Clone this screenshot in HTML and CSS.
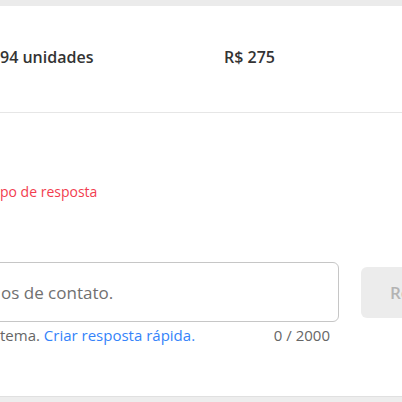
FILE: index.html
```html
<!DOCTYPE html>
<html lang="pt-BR">
<head>
<meta charset="utf-8">
<link rel="stylesheet" href="styles.css">
</head>
<body>
<div class="topbar"></div>
<main class="card">
  <section class="summary">
    <span class="cell cell-qty">94 unidades</span>
    <span class="cell cell-price">R$ 275</span>
  </section>
  <section class="answer">
    <p class="error">po de resposta</p>
    <div class="compose">
      <div class="field">
        <div class="textarea"><span class="placeholder">os de contato.</span></div>
        <div class="helper">
          <span>tema. <a class="link" href="#">Criar resposta rápida.</a></span>
          <span class="count">0 / 2000</span>
        </div>
      </div>
      <button class="submit" type="button">Responder</button>
    </div>
  </section>
</main>
<div class="bottombar"></div>
</body>
</html>
```
FILE: styles.css
```css
html, body {
  margin: 0;
  padding: 0;
  background: #fff;
  overflow: hidden;
}
body {
  width: 402px;
  height: 402px;
  font-family: "Open Sans", "Noto Sans", sans-serif;
  color: #333;
  display: flex;
  flex-direction: column;
}
.topbar {
  height: 6px;
  background: #ebebeb;
  flex: none;
}
.card {
  flex: 1;
  display: flex;
  flex-direction: column;
}
.summary {
  height: 107px;
  border-bottom: 1px solid #e6e6e6;
  display: flex;
  align-items: center;
  padding-bottom: 4px;
  box-sizing: border-box;
  font-size: 16px;
  font-weight: 600;
  color: #333;
}
.cell-qty {
  width: 224px;
}
.answer {
  flex: 1;
  display: flex;
  flex-direction: column;
}
.error {
  margin: 70px 0 0;
  font-size: 14px;
  line-height: 18px;
  color: #f23d4f;
}
.compose {
  margin-top: 61px;
  display: flex;
  align-items: flex-start;
  gap: 22px;
}
.field {
  width: 359px;
  flex: none;
  margin-left: -20px;
}
.textarea {
  height: 58px;
  border: 1px solid #c6c6c6;
  border-radius: 6px;
  display: flex;
  align-items: center;
  padding-left: 20px;
  font-size: 17px;
  color: #707070;
}
.helper {
  display: flex;
  justify-content: space-between;
  padding: 4px 9px 0 20px;
  font-size: 15px;
  line-height: 18px;
  color: #666;
}
.link {
  color: #3483fa;
  text-decoration: none;
}
.count {
  color: #666;
}
.submit {
  margin-top: 5px;
  height: 51px;
  width: 120px;
  flex: none;
  border: none;
  border-radius: 6px;
  background: #ececec;
  color: #b3b3b3;
  font-family: inherit;
  font-size: 17px;
  font-weight: 600;
  padding: 0 0 0 29px;
  text-align: left;
}
.bottombar {
  height: 5px;
  border-top: 1px solid #e0e0e0;
  background: #ededed;
  flex: none;
}
```
